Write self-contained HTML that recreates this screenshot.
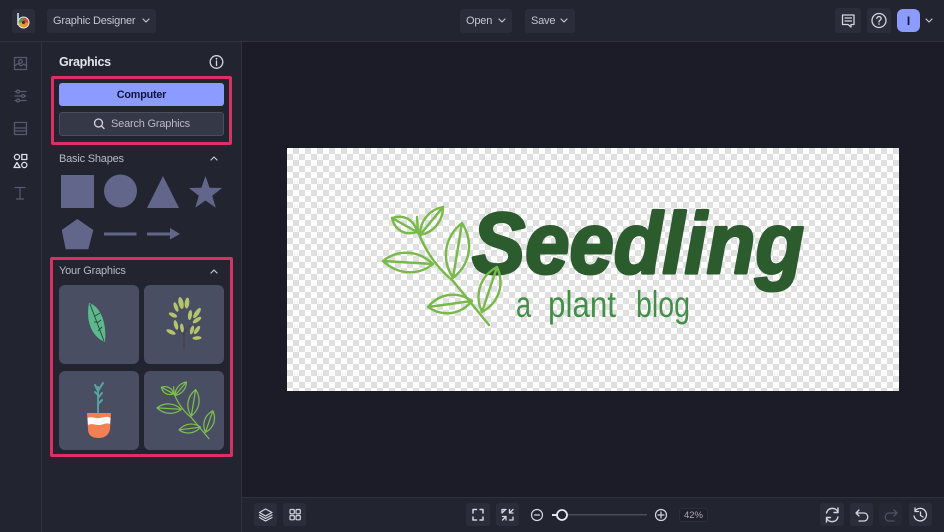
<!DOCTYPE html>
<html><head><meta charset="utf-8">
<style>
html,body{margin:0;padding:0;background:#1b1c27}
#p{position:relative;width:944px;height:532px;overflow:hidden;background:#1b1c27;font-family:"Liberation Sans",sans-serif;color:#c9cbd6}
.a{position:absolute}
.btn{position:absolute;background:#2b2d3a;border-radius:3px;display:flex;align-items:center;justify-content:center;font-size:11px;letter-spacing:-.2px;color:#c4c6d2;box-sizing:border-box}
.t{position:absolute;white-space:nowrap;line-height:14px;font-size:11px;letter-spacing:-.2px}
.tile{position:absolute;background:#4a4e63;border-radius:6px;width:80px;height:79px}
.pk{position:absolute;border:3px solid #dc2f63;box-sizing:border-box;border-radius:2px}
svg{position:absolute;left:0;top:0}
#chk{left:287px;top:148px;width:612px;height:243px;background-color:#fff;background-image:conic-gradient(#e0e0e0 25%,#fff 0 50%,#e0e0e0 0 75%,#fff 0);background-size:12px 12px}
</style></head><body><div id="p">
<div class="a" style="left:0;top:0;width:944px;height:41px;background:#22242f;border-bottom:1px solid #2f313e"></div>
<div class="a" style="left:0;top:42px;width:41px;height:490px;background:#22242f;border-right:1px solid #2f313e"></div>
<div class="a" style="left:42px;top:42px;width:199px;height:490px;background:#22242f;border-right:1px solid #2f313e"></div>
<div class="a" style="left:242px;top:497px;width:702px;height:35px;background:#22242f;border-top:1px solid #2f313e"></div>
<div class="a" id="chk"></div>

<div class="btn" style="left:12px;top:9px;width:23px;height:24px"></div>
<div class="btn" style="left:47px;top:9px;width:109px;height:24px"></div>
<div class="t" style="left:53px;top:14px;color:#c4c6d2">Graphic Designer</div>
<div class="btn" style="left:460px;top:9px;width:52px;height:24px"></div>
<div class="t" style="left:466px;top:14px;color:#c4c6d2">Open</div>
<div class="btn" style="left:525px;top:9px;width:50px;height:24px"></div>
<div class="t" style="left:531px;top:14px;color:#c4c6d2">Save</div>
<div class="btn" style="left:835px;top:8px;width:26px;height:25px"></div>
<div class="btn" style="left:867px;top:8px;width:24px;height:25px"></div>
<div class="btn" style="left:897px;top:9px;width:23px;height:23px;background:#8b9bff;border-radius:6px;color:#12143a;font-size:12px;font-weight:bold">I</div>

<div class="t" style="left:59px;top:55px;font-size:12.5px;letter-spacing:-.3px;font-weight:bold;color:#e4e5ec">Graphics</div>
<div class="btn" style="left:59px;top:83px;width:165px;height:23px;background:#8b9bff;color:#12143a;font-size:10.8px;letter-spacing:-.2px;font-weight:bold">Computer</div>
<div class="btn" style="left:59px;top:112px;width:165px;height:24px;background:#353847;border:1px solid #4a4d5e;padding-left:18px;color:#b8bac8">Search Graphics</div>
<div class="t" style="left:59px;top:152px;color:#b8bac8">Basic Shapes</div>
<div class="t" style="left:59px;top:264px;color:#b8bac8">Your Graphics</div>
<div class="pk" style="left:51px;top:76px;width:181px;height:69px"></div>
<div class="pk" style="left:50px;top:257px;width:183px;height:200px"></div>
<div class="tile" style="left:59px;top:285px"></div>
<div class="tile" style="left:144px;top:285px"></div>
<div class="tile" style="left:59px;top:371px"></div>
<div class="tile" style="left:144px;top:371px"></div>

<div class="btn" style="left:254px;top:503px;width:23px;height:23px"></div>
<div class="btn" style="left:283px;top:503px;width:23px;height:23px"></div>
<div class="btn" style="left:466px;top:503px;width:24px;height:23px"></div>
<div class="btn" style="left:496px;top:503px;width:23px;height:23px"></div>
<div class="btn" style="left:820px;top:503px;width:24px;height:23px"></div>
<div class="btn" style="left:850px;top:503px;width:23px;height:23px"></div>
<div class="btn" style="left:879px;top:503px;width:23px;height:23px;background:#262834"></div>
<div class="btn" style="left:909px;top:503px;width:23px;height:23px"></div>
<div class="btn" style="left:679px;top:508px;width:29px;height:14px;background:#1f202b;border:1px solid #2c2e3a;font-size:9.5px;letter-spacing:0;color:#a8aab8">42%</div>

<svg width="944" height="532" viewBox="0 0 944 532" fill="none">
<defs>
<g id="lv" stroke-linecap="round" stroke-linejoin="round">
<path d="M419 234Q430 262 453 281L489 325"/>
<path d="M418 233L417 217"/>
<path d="M420 235C433.800 232.300 443 221 443 207C429.200 209.700 420 220.900 420 235M420 235L443 207"/>
<path d="M417 232C414.100 219.700 404.100 214.100 392 218C394.900 230.300 404.900 235.900 417 232M417 232L392 218"/>
<path d="M433 264C418 250 398 249 383 261C398 275 418 276 433 264M433 264L383 261"/>
<path d="M453 278C470.500 263.900 474.100 241.900 462 223C444.500 237.100 440.900 259.100 453 278M453 278L462 223"/>
<path d="M472 301C460.400 314.800 442.800 317.200 428 307C439.600 293.200 457.200 290.800 472 301M472 301L428 307"/>
<path d="M482 312C498.900 302.700 504.900 284.700 497 267C480.100 276.300 474.100 294.300 482 312M482 312L497 267"/>
</g>
</defs>
<!-- logo -->
<text x="472" y="273" font-family="Liberation Sans" font-style="italic" font-weight="bold" font-size="86" fill="#2c5c2e" stroke="#2c5c2e" stroke-width="3" stroke-linejoin="round" textLength="332" lengthAdjust="spacingAndGlyphs">Seedling</text>
<use href="#lv" stroke="#78b94a" stroke-width="2.400"/>
<g font-family="Liberation Sans" font-size="37" fill="#429048">
<text x="516" y="317" textLength="15" lengthAdjust="spacingAndGlyphs">a</text>
<text x="548" y="317" textLength="68" lengthAdjust="spacingAndGlyphs">plant</text>
<text x="636" y="317" textLength="54" lengthAdjust="spacingAndGlyphs">blog</text>
</g>

<!-- logo button -->
<path d="M18 13V25" stroke="#e8e8ee" stroke-width="1.500"/>
<circle cx="23.500" cy="22.500" r="6" fill="#e8e8ee"/>
<circle cx="23.500" cy="22.500" r="5" fill="#d9a63a"/>
<path d="M23.500 22.500L23.500 17.500A5 5 0 0 1 28.500 22.500Z" fill="#d8483c"/>
<path d="M23.500 22.500L28.500 22.500A5 5 0 0 1 23.500 27.500Z" fill="#e88f2e"/>
<path d="M23.500 22.500L18.500 22.500A5 5 0 0 1 23.500 17.500Z" fill="#4d9a52"/>
<circle cx="23.500" cy="22.500" r="1.500" fill="#2b2d3a"/>
<!-- chevrons -->
<g stroke="#c4c6d2" stroke-width="1.200" stroke-linecap="round" stroke-linejoin="round">
<path d="M143 19L146 22L149 19M499 19L502 22L505 19M561 19L564 22L567 19M926 19L929 22L932 19"/>
<path d="M211 160L214 157L217 160M211 273L214 270L217 273"/>
</g>
<!-- top right icons -->
<g stroke="#d5d6df" stroke-width="1.300" stroke-linejoin="round" stroke-linecap="round">
<path d="M842.500 15H854V24.500H851V27L848 24.500H842.500Z"/>
<path d="M845 18H851.500M845 21H851.500"/>
<circle cx="879" cy="20.500" r="7"/>
<path d="M876.800 18.500C877 15.800 881.300 16 881.200 18.600C881.100 20.200 879 20.200 879 22"/>
<circle cx="216.500" cy="62" r="6.300"/>
<path d="M216.500 61V65.500"/>
</g>
<circle cx="879" cy="24" r=".8" fill="#d5d6df"/>
<circle cx="216.500" cy="58.800" r=".9" fill="#d5d6df"/>
<!-- rail -->
<g stroke="#565a70" stroke-width="1.300" stroke-linecap="round" stroke-linejoin="round">
<rect x="14.500" y="57.500" width="12" height="12"/>
<circle cx="20.500" cy="61.500" r="1.800"/>
<path d="M14.500 66L18 63.500L21 66L24 64L26.500 66"/>
<path d="M15 91.500H26M15 96H26M15 100.500H26"/>
<circle cx="18" cy="91.500" r="1.500" fill="#22242f"/><circle cx="23" cy="96" r="1.500" fill="#22242f"/><circle cx="18" cy="100.500" r="1.500" fill="#22242f"/>
<rect x="14.500" y="122.500" width="12" height="12"/>
<path d="M14.500 128H26.500" />
<path d="M14.500 131H26.500" />
<path d="M15 187.500H25M20 187.500V199M16.500 199H23.500" stroke-width="1.200"/>
</g>
<g stroke="#dfe0e8" stroke-width="1.300" stroke-linejoin="round">
<circle cx="17" cy="157" r="2.600"/>
<rect x="21.800" y="154.500" width="5" height="5"/>
<path d="M17 162.500L20 167.500H14Z"/>
<circle cx="24.300" cy="165" r="2.600"/>
</g>
<!-- search icon -->
<circle cx="98.500" cy="123" r="4" stroke="#d5d6df" stroke-width="1.300"/>
<path d="M101.500 126L104 128.500" stroke="#d5d6df" stroke-width="1.300" stroke-linecap="round"/>
<!-- basic shapes -->
<g fill="#62668a">
<rect x="61" y="175" width="33" height="33"/>
<circle cx="120.500" cy="191" r="16.500"/>
<path d="M163 176L179 208H147Z"/>
<path d="M205.500 176L209.600 187.800L222.100 188L212.200 195.700L215.800 207.700L205.500 200.500L195.200 207.700L198.800 195.700L188.900 188L201.400 187.800Z"/>
<path d="M77.300 219L93.300 230L88.300 249.300H65.700L61.700 230Z"/>
<rect x="104" y="232.500" width="32.500" height="3"/>
<rect x="147" y="232.500" width="26" height="3"/>
<path d="M170 228L180 234L170 239.500Z"/>
</g>
<!-- tile 1 leaf -->
<path d="M89 303C100 306 107 322 105 342C94 338 85 324 89 303Z" fill="#5cb98c"/>
<path d="M90 304L104 341M95 316L100 313M97 323L101 320M94 322L97 322M98 331L102 327" stroke="#2e4a45" stroke-width="1"/>
<!-- tile 2 sprig -->
<path d="M184 349V325M184 335L176 327M184 333L190 325" stroke="#46424c" stroke-width="1.200"/>
<g fill="#b4c46a">
<ellipse cx="181" cy="303" rx="2.500" ry="6" transform="rotate(-12 181 303)"/>
<ellipse cx="187" cy="303" rx="2.300" ry="5.500" transform="rotate(6 187 303)"/>
<ellipse cx="176" cy="307" rx="2" ry="5" transform="rotate(-20 176 307)"/>
<ellipse cx="173" cy="315" rx="4.500" ry="2" transform="rotate(25 173 315)"/>
<ellipse cx="190" cy="315" rx="2" ry="5" transform="rotate(8 190 315)"/>
<ellipse cx="197" cy="313" rx="2.200" ry="6" transform="rotate(35 197 313)"/>
<ellipse cx="197" cy="320" rx="2" ry="5" transform="rotate(55 197 320)"/>
<ellipse cx="176" cy="325" rx="2" ry="5" transform="rotate(-15 176 325)"/>
<ellipse cx="182" cy="328" rx="1.800" ry="4.500" transform="rotate(-8 182 328)"/>
<ellipse cx="192" cy="330" rx="1.800" ry="4.500" transform="rotate(15 192 330)"/>
<ellipse cx="197" cy="330" rx="2" ry="4.800" transform="rotate(35 197 330)"/>
<ellipse cx="171" cy="332" rx="5" ry="2" transform="rotate(25 171 332)"/>
<ellipse cx="197" cy="338" rx="4.500" ry="1.800" transform="rotate(-5 197 338)"/>
</g>
<!-- tile 3 pot -->
<path d="M98 413V386" stroke="#59a4a2" stroke-width="1.800"/>
<path d="M98 391L95 385M98 391L103 383M98 398L102 393M98 404L102 400M98 395L95 392" stroke="#59a4a2" stroke-width="2" stroke-linecap="round"/>
<path d="M87 413H111L110 429C109 436 103 438 99 438C93 438 88 436 88 429Z" fill="#f47f52"/>
<path d="M87.500 418C92 416 96 419 100 418C104 417 107 416 110.500 418L110 424C106 422 103 425 99 425C95 425 92 423 88 425Z" fill="#fff"/>
<!-- tile 4 -->
<use href="#lv" stroke="#7cc04e" stroke-width="2.500" transform="translate(-30.700 282.600) scale(.49 .48)"/>
<!-- bottom icons -->
<g stroke="#d5d6df" stroke-width="1.200" stroke-linejoin="round" stroke-linecap="round">
<path d="M265.500 509L272 512.500L265.500 516L259.500 512.500Z"/>
<path d="M259.500 515L265.500 518.500L272 515M259.500 517.500L265.500 521L272 517.500"/>
<rect x="290" y="509.500" width="4.300" height="4.300" rx="1"/><rect x="296" y="509.500" width="4.300" height="4.300" rx="1"/><rect x="290" y="515.500" width="4.300" height="4.300" rx="1"/><rect x="296" y="515.500" width="4.300" height="4.300" rx="1"/>
<path d="M473 513V509.500H476.500M480 509.500H483V513M483 517V520H480M476.500 520H473V517" stroke-width="1.500"/>
<path d="M502 513V509.500H506M502 513L505.500 509.500M513 509.500L509.500 513M509.500 509.500V513H513M502.500 516.500H506V520M502.500 520L506 516.500M513 517V520H509.500" stroke-width="1.300"/>
<circle cx="537" cy="515" r="5.500"/><path d="M534.500 515H539.500"/>
<circle cx="661" cy="515" r="5.500"/><path d="M658 515H664M661 512V518"/>
<path d="M826.500 513C828 507 836 507 838 512M838 508V512.500H834M838 517C836.500 523 828.500 523 826.500 518M826.500 522V517.500H830.500" stroke-width="1.400"/>
<path d="M856 513H864C869 513 869 521 864 521H859M856 513L859 510M856 513L859 516" stroke-width="1.300"/>
<path d="M897 513H889C884 513 884 521 889 521H894M897 513L894 510M897 513L894 516" stroke="#4e5162" stroke-width="1.300"/>
<path d="M915 511A6.300 6.300 0 1 1 914 516M915 508V511.500H918.500M920.500 512V515.500L923 517" stroke-width="1.300"/>
</g>
<!-- zoom slider -->
<rect x="552" y="514" width="95" height="1.500" fill="#4a4d5e"/>
<rect x="552" y="514" width="8" height="2" fill="#e5e6ec"/>
<circle cx="562" cy="515" r="5" fill="#22242f" stroke="#e8e9ef" stroke-width="1.800"/>
</svg>
</div></body></html>
